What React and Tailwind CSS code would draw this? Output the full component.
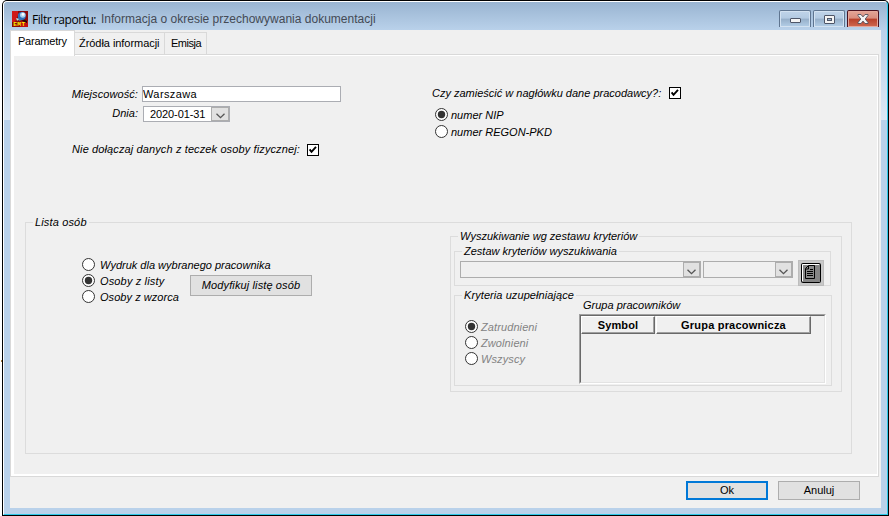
import React, { useState } from 'react';

const AppIcon = () => (
  <svg width="16" height="16" viewBox="0 0 16 16" className="mt-[9px] shrink-0">
    <rect width="16" height="16" fill="#8c0808" />
    <path d="M0 0h6v4l-3 7H0z" fill="#d01818" />
    <path d="M10 9l6 1v6H8z" fill="#c01010" />
    <path d="M11 8l4 2v2l-5-2z" fill="#200808" />
    <path d="M4.5 8l4-3 3 3-4 2z" fill="#507890" />
    <circle cx="9.8" cy="5" r="4" fill="#2f6fb8" />
    <circle cx="10.8" cy="4" r="2.8" fill="#a8d0ec" />
    <circle cx="11" cy="3.4" r="1.4" fill="#fff" />
    <path d="M4 7l3 1-2 2z" fill="#c8d8d8" />
    <text x="1.2" y="14.8" fontSize="6.2" fontWeight="bold" fontFamily="Liberation Mono, monospace" fill="#ffee00" letterSpacing="0.4">EMT</text>
  </svg>
);

const CheckBox = ({ checked, onChange }) => (
  <button type="button" onClick={onChange} className="w-[12px] h-[12px] border border-black bg-white shrink-0 block">
    {checked && (
      <svg width="10" height="10" viewBox="0 0 10 10" className="block">
        <path d="M1.6 4.4l1.9 2.4L8 1.8" fill="none" stroke="#000" strokeWidth="1.9" />
      </svg>
    )}
  </button>
);

const Radio = ({ label, checked, onSelect, disabled, spacing = 'ml-[3px]' }) => (
  <label className={`flex items-center h-[13px] ${disabled ? 'text-[#838383]' : 'text-black'}`} onClick={disabled ? undefined : onSelect}>
    <svg width="13" height="13" viewBox="0 0 13 13" className="shrink-0">
      <circle cx="6.5" cy="6.5" r="6" fill="#fff" stroke="#333" />
      {checked && <circle cx="6.5" cy="6.5" r="3.7" fill="#333" />}
    </svg>
    <span className={`italic whitespace-nowrap mt-px ${spacing}`}>{label}</span>
  </label>
);

const DropArrow = ({ className = '' }) => (
  <span className={`bg-[#e1e1e1] border-[#adadad] flex items-center justify-center shrink-0 ${className}`}>
    <svg width="9" height="6" viewBox="0 0 9 6" className="mt-[4px]">
      <path d="M0.5 0.7l4 4 4-4" fill="none" stroke="#555" strokeWidth="1.3" />
    </svg>
  </span>
);

const Group = ({ title, className, legendClass = '', children }) => (
  <fieldset className={`border border-[#dcdcdc] min-w-0 ${className}`}>
    <legend className={`ml-[7px] px-[2px] h-[13px] leading-[13px] italic whitespace-nowrap ${legendClass}`}>{title}</legend>
    {children}
  </fieldset>
);

const HeaderCell = ({ className, children }) => (
  <div className={`h-[18px] pt-[2px] border-t border-l border-t-white border-l-white border-r border-b border-r-[#696969] border-b-[#696969] shadow-[inset_-1px_-1px_0_#a0a0a0] ${className}`}>
    {children}
  </div>
);

const WindowButton = ({ close, children }) => (
  <button
    type="button"
    className={`w-[32px] h-[17px] border border-b-0 rounded-t-[2px] flex items-center justify-center ${
      close
        ? 'border-[#4a1220] bg-[linear-gradient(#e3a597_0%,#d98d7e_45%,#b8402a_50%,#cf6a52_100%)] shadow-[inset_0_0_0_1px_#e5a89c]'
        : 'border-[#5f7590] bg-[linear-gradient(#c0d4e9_0%,#b3cae2_45%,#96afc9_50%,#b4cfe8_100%)] shadow-[inset_0_0_0_1px_#d3e2f1]'
    }`}
  >
    {children}
  </button>
);

const TABS = [
  { name: 'Źródła informacji', size: 'w-[90px] pl-[4px] tracking-[-0.05px]' },
  { name: 'Emisja', size: 'w-[42px] pl-[6px] tracking-[-0.5px]' },
];

export default function App() {
  const [header, setHeader] = useState(true);
  const [skipFiles, setSkipFiles] = useState(true);
  const [numberType, setNumberType] = useState('nip');
  const [people, setPeople] = useState('list');

  return (
    <div className="relative w-[889px] h-[516px] bg-white pl-[2px] overflow-hidden text-[11px] leading-[13px] text-black font-['Liberation_Sans',Arial,sans-serif]">
      <span className="absolute left-px top-[360px] w-px h-[2px] bg-[#a87838]" />
      <div className="h-full bg-black rounded-tl-[5px] rounded-tr-[5px] pl-px pt-px pr-px pb-px">
        <div className="h-full bg-[#b9d1ea] border-t border-l border-t-white border-l-white border-r border-b border-r-[#2ec8e8] border-b-[#2ec8e8] rounded-t-[4px] bg-[linear-gradient(#99b4d1_0px,#b9d1ea_28px,#dce8f5_118px,#b9d1ea_118px,#b9d1ea_100%)] flex flex-col">
          {/* Title bar */}
          <div className="h-[28px] shrink-0 flex items-start pl-[8px] pr-[8px]">
            <AppIcon />
            <span className="ml-[4px] mt-[9px] w-[69px] leading-[17px] text-[12px] tracking-[-0.45px] whitespace-nowrap font-['Open_Sans','Noto_Sans',sans-serif]">Filtr raportu:</span>
            <span className="mt-[9px] leading-[16px] text-[12px] text-[#444a55] whitespace-nowrap tracking-[0.01px]">Informacja o okresie przechowywania dokumentacji</span>
            <div className="ml-auto mt-[8px] flex gap-[2px]">
              <WindowButton>
                <svg width="11" height="5" viewBox="0 0 11 5" className="mt-[3px]">
                  <rect x="0.5" y="0.5" width="10" height="4" rx="0.5" fill="#f4f4f4" stroke="#4e5668" />
                </svg>
              </WindowButton>
              <WindowButton>
                <svg width="11" height="9" viewBox="0 0 11 9">
                  <rect x="0.5" y="0.5" width="10" height="8" rx="0.5" fill="#f4f4f4" stroke="#4e5668" />
                  <rect x="3.5" y="3.5" width="4" height="2" fill="#9db6d0" stroke="#4e5668" />
                </svg>
              </WindowButton>
              <WindowButton close>
                <svg width="12" height="10" viewBox="0 0 12 10">
                  <path d="M1 0.5h3l2 2.4 2-2.4h3v1L8.2 5 11 8.5v1H8L6 7.1 4 9.5H1v-1L3.8 5 1 1.5z" fill="#f4f4f4" stroke="#50505e" strokeWidth="0.9" />
                </svg>
              </WindowButton>
            </div>
          </div>

          <div className="ml-[6px] mr-[6px] h-[478px] shrink-0 bg-[#f0f0f0]">
            {/* Tabs */}
            <div className="flex items-end h-[24px]">
              <div className="relative -mb-[2px] w-[65px] h-[26px] bg-white border border-b-0 border-[#d9d9d9] pl-[7px] pt-[4px] whitespace-nowrap tracking-[-0.22px]">Parametry</div>
              {TABS.map((tab) => (
                <div key={tab.name} className={`h-[22px] border-t border-r border-[#d9d9d9] pt-[4px] whitespace-nowrap ${tab.size}`}>{tab.name}</div>
              ))}
            </div>

            <div className="w-[869px] h-[423px] border border-[#d9d9d9]">
              <div className="h-full border-white border-t border-l-[3px] border-r border-b-[2px]">
                <div className="flex h-[160px]">
                  <div className="w-[418px] pt-[30px]">
                    <div className="flex h-[16px]">
                      <label className="w-[124px] mr-[4px] pt-[2px] text-right italic tracking-[0.08px]">Miejscowość:</label>
                      <input defaultValue="Warszawa" className="w-[199px] h-[16px] border border-[#abadb3] bg-white px-0 outline-none tracking-[0.4px]" />
                    </div>
                    <div className="flex h-[16px] mt-[4px]">
                      <label className="w-[124px] mr-[5px] pt-px text-right italic">Dnia:</label>
                      <div className="flex w-[87px] h-[16px] border border-[#abadb3] bg-white">
                        <span className="flex-1 pl-[6px] pt-px whitespace-nowrap tracking-[-0.1px]">2020-01-31</span>
                        <DropArrow className="w-[18px] border" />
                      </div>
                    </div>
                    <div className="flex mt-[22px] pl-[58px]">
                      <span className="w-[235px] -mt-px italic whitespace-nowrap tracking-[0.12px]">Nie dołączaj danych z teczek osoby fizycznej:</span>
                      <CheckBox checked={skipFiles} onChange={() => setSkipFiles(!skipFiles)} />
                    </div>
                  </div>

                  <div className="pt-[31px]">
                    <div className="flex h-[12px]">
                      <span className="w-[237px] italic whitespace-nowrap">Czy zamieścić w nagłówku dane pracodawcy?:</span>
                      <CheckBox checked={header} onChange={() => setHeader(!header)} />
                    </div>
                    <div className="pl-[3px] pt-[9px] flex flex-col gap-[4px]">
                      <Radio label="numer NIP" checked={numberType === 'nip'} onSelect={() => setNumberType('nip')} />
                      <Radio label="numer REGON-PKD" checked={numberType === 'regon'} onSelect={() => setNumberType('regon')} />
                    </div>
                  </div>
                </div>

                <Group title="Lista osób" className="ml-[11px] w-[827px] h-[238px]" legendClass="tracking-[0.15px]">
                  <div className="flex">
                    <div className="w-[424px] pl-[56px] pt-[29px] flex">
                      <div className="flex flex-col gap-[3px] w-[108px]">
                        <Radio label="Wydruk dla wybranego pracownika" checked={people === 'one'} onSelect={() => setPeople('one')} spacing="ml-[5px]" />
                        <Radio label="Osoby z listy" checked={people === 'list'} onSelect={() => setPeople('list')} spacing="ml-[5px] tracking-[0.15px]" />
                        <Radio label="Osoby z wzorca" checked={people === 'pattern'} onSelect={() => setPeople('pattern')} spacing="ml-[5px] tracking-[0.05px]" />
                      </div>
                      <button type="button" className="mt-[17px] w-[122px] h-[21px] bg-[#e1e1e1] border border-[#adadad] italic whitespace-nowrap tracking-[0.12px]">Modyfikuj listę osób</button>
                    </div>

                    <Group title="Wyszukiwanie wg zestawu kryteriów" className="mt-px w-[392px] h-[162px]">
                      <Group title="Zestaw kryteriów wyszukiwania" className="ml-[3px] mt-[2px] w-[377px] h-[41px]">
                        <div className="flex pl-[5px] pt-[3px]">
                          <div className="w-[241px] h-[17px] mr-[2px] border border-[#adadad] flex justify-end">
                            <DropArrow className="w-[17px] border" />
                          </div>
                          <div className="w-[90px] h-[17px] mr-[5px] border border-[#adadad] flex justify-end">
                            <DropArrow className="w-[17px] border" />
                          </div>
                          <button type="button" className="relative -mt-px w-[26px] h-[26px] bg-[#c8c8c8] border border-[#bdbdbd] shrink-0 flex items-center justify-center">
                            <svg width="20" height="20" viewBox="0 0 20 20">
                              <rect x="0.5" y="0.5" width="19" height="19" rx="1" fill="#858585" stroke="#000" />
                              <path d="M1.5 18V1.5H18" fill="none" stroke="#fff" />
                              <path d="M7.5 2.5h6v13h-9v-10z" fill="#8a8a8a" stroke="#000" />
                              <path d="M7.5 3v3h-3M6 8.5h6M9 6.5h3M6 10.5h6M6 12.5h6" fill="none" stroke="#000" />
                            </svg>
                          </button>
                        </div>
                      </Group>
                      <Group title="Kryteria uzupełniające" className="ml-[3px] mt-[3px] w-[378px] h-[97px]" legendClass="tracking-[0.08px]">
                        <div className="flex pl-[10px]">
                          <div className="w-[114px] pt-[18px] flex flex-col gap-[3px]">
                            <Radio label="Zatrudnieni" checked disabled spacing="ml-[3px] tracking-[0.1px]" />
                            <Radio label="Zwolnieni" disabled spacing="ml-[3px] tracking-[0.1px]" />
                            <Radio label="Wszyscy" disabled spacing="ml-[3px] tracking-[0.1px]" />
                          </div>
                          <div className="-mt-[3px]">
                            <div className="pl-[4px] h-[15px] italic">Grupa pracowników</div>
                            {/* Group table */}
                            <div className="w-[247px] h-[70px] border border-t-[#a0a0a0] border-l-[#a0a0a0] border-r-white border-b-white">
                              <div className="h-full border border-t-[#696969] border-l-[#696969] border-r-[#e3e3e3] border-b-[#e3e3e3] flex items-start gap-px font-bold text-center">
                                <HeaderCell className="w-[74px] tracking-[0.15px]">Symbol</HeaderCell>
                                <HeaderCell className="w-[155px] tracking-[0.2px]">Grupa pracownicza</HeaderCell>
                              </div>
                            </div>
                          </div>
                        </div>
                      </Group>
                    </Group>
                  </div>
                </Group>
              </div>
            </div>

            <div className="flex gap-[10px] pl-[676px] pt-[4px]">
              <button type="button" className="w-[82px] h-[19px] bg-[#e1e1e1] border-2 border-[#0078d7]">Ok</button>
              <button type="button" className="w-[82px] h-[19px] bg-[#e1e1e1] border border-[#adadad]">Anuluj</button>
            </div>
          </div>
        </div>
      </div>
    </div>
  );
}
